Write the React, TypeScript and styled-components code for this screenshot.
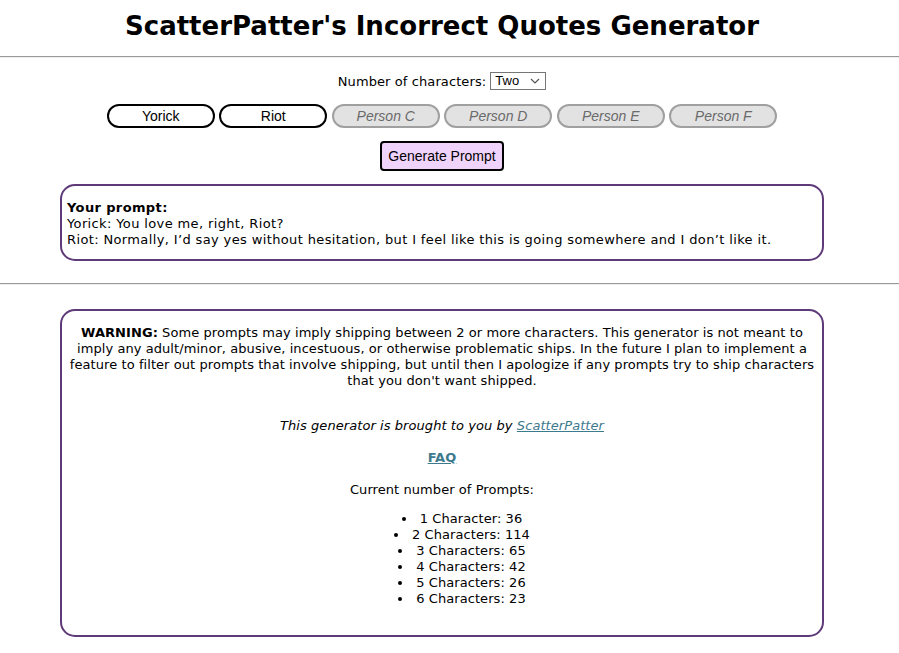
import React from "react";
import styled, { createGlobalStyle } from "styled-components";

const Global = createGlobalStyle`
  html, body { margin: 0; padding: 0; background: #fff; }
  body { font-family: Verdana, "DejaVu Sans", sans-serif; color: #000; }
`;

const Page = styled.div`
  width: 100%;
  display: flex;
  flex-direction: column;
  align-items: stretch;
`;

const Column = styled.div`
  width: 884px;
  display: flex;
  flex-direction: column;
  align-items: center;
`;

const Title = styled.h1`
  margin: 0;
  padding: 11px 0 0;
  height: 46px;
  box-sizing: border-box;
  font-family: Verdana, "DejaVu Sans", sans-serif;
  font-weight: bold;
  font-size: 26px;
  line-height: 30px;
  text-align: center;
  width: 884px;
`;

const Rule = styled.div<{ $top: number }>`
  margin-top: ${(p) => p.$top}px;
  height: 0;
  border-top: 1px solid #9a9a9a;
  border-bottom: 1px solid #eeeeee;
  width: 100%;
`;

const CountRow = styled.div`
  margin-top: 14px;
  display: flex;
  align-items: center;
  gap: 4px;
  font-size: 13px;
  letter-spacing: 0.1px;
  height: 18px;
`;

const SelectBox = styled.div`
  position: relative;
  width: 56px;
  height: 18px;
  box-sizing: border-box;
  border: 1px solid #767676;
  font-family: "Liberation Sans", Arial, sans-serif;
  font-size: 13px;
  letter-spacing: 0;
  line-height: 16px;
  padding-left: 4px;
  background: #fff;
`;

const Chevron = styled.svg`
  position: absolute;
  right: 5px;
  top: 5px;
`;

const NameRow = styled.div`
  margin-top: 14px;
  display: flex;
  gap: 4.5px;
`;

const NameButton = styled.div<{ $disabled?: boolean }>`
  width: 108px;
  height: 24px;
  box-sizing: border-box;
  border-radius: 12px;
  border: 2px solid ${(p) => (p.$disabled ? "#a0a0a0" : "#000")};
  background: ${(p) => (p.$disabled ? "#e2e2e2" : "#fff")};
  color: ${(p) => (p.$disabled ? "#6a6a6a" : "#000")};
  font-style: ${(p) => (p.$disabled ? "italic" : "normal")};
  font-family: "Liberation Sans", Arial, sans-serif;
  font-size: 14px;
  line-height: 20px;
  text-align: center;
`;

const GenerateButton = styled.button`
  margin-top: 13px;
  width: 124px;
  height: 30px;
  box-sizing: border-box;
  border: 2px solid #000;
  border-radius: 4px;
  background: #f0d3fa;
  font-family: "Liberation Sans", Arial, sans-serif;
  font-size: 14px;
  color: #000;
  padding: 0;
`;

const Box = styled.div<{ $center?: boolean; $spacing: number }>`
  width: 764px;
  box-sizing: border-box;
  border: 2px solid #5e3a78;
  border-radius: 15px;
  font-size: 13px;
  letter-spacing: ${(p) => p.$spacing}px;
  line-height: 16px;
  text-align: ${(p) => (p.$center ? "center" : "left")};
`;

const PromptBox = styled(Box)`
  margin-top: 13px;
  padding: 14px 5px 11px;
`;

const InfoBox = styled(Box)`
  margin-top: 24px;
  padding: 14px 6px 28px;
`;

const Para = styled.p<{ $top?: number }>`
  margin: ${(p) => p.$top ?? 0}px 0 0;
`;

const Link = styled.a`
  color: #3d7a8d;
  text-decoration: underline;
`;

const List = styled.ul`
  margin: 13px 0 0;
  padding: 0 0 0 40px;
  list-style-position: inside;
`;

const Item = styled.li`
  text-align: center;
  line-height: 16px;
`;

const names = [
  { n: "Yorick" },
  { n: "Riot" },
  { n: "Person C", d: true },
  { n: "Person D", d: true },
  { n: "Person E", d: true },
  { n: "Person F", d: true },
];

const counts = [
  "1 Character: 36",
  "2 Characters: 114",
  "3 Characters: 65",
  "4 Characters: 42",
  "5 Characters: 26",
  "6 Characters: 23",
];

export default function App() {
  return (
    <Page>
      <Global />
      <Title>ScatterPatter's Incorrect Quotes Generator</Title>
      <Rule $top={10} />
      <Column>
        <CountRow>
          <span>Number of characters:</span>
          <SelectBox>
            Two
            <Chevron width="10" height="6" viewBox="0 0 10 6">
              <path d="M1 1 L5 5 L9 1" fill="none" stroke="#555" strokeWidth="1.2" />
            </Chevron>
          </SelectBox>
        </CountRow>
        <NameRow>
          {names.map((x) => (
            <NameButton key={x.n} $disabled={x.d}>
              {x.n}
            </NameButton>
          ))}
        </NameRow>
        <GenerateButton>Generate Prompt</GenerateButton>
        <PromptBox $spacing={0.37}>
          <b>Your prompt:</b>
          <br />
          Yorick: You love me, right, Riot?
          <br />
          Riot: Normally, I’d say yes without hesitation, but I feel like this is going somewhere and I don’t like it.
        </PromptBox>
      </Column>
      <Rule $top={22} />
      <Column>
        <InfoBox $center $spacing={0.07}>
          <Para>
            <b>WARNING:</b> Some prompts may imply shipping between 2 or more characters. This generator is not meant to
            imply any adult/minor, abusive, incestuous, or otherwise problematic ships. In the future I plan to implement a
            feature to filter out prompts that involve shipping, but until then I apologize if any prompts try to ship
            characters that you don't want shipped.
          </Para>
          <Para $top={29}>
            <i>
              This generator is brought to you by <Link href="#">ScatterPatter</Link>
            </i>
          </Para>
          <Para $top={16}>
            <b>
              <Link href="#">FAQ</Link>
            </b>
          </Para>
          <Para $top={16}>Current number of Prompts:</Para>
          <List>
            {counts.map((c) => (
              <Item key={c}>{c}</Item>
            ))}
          </List>
        </InfoBox>
      </Column>
    </Page>
  );
}
